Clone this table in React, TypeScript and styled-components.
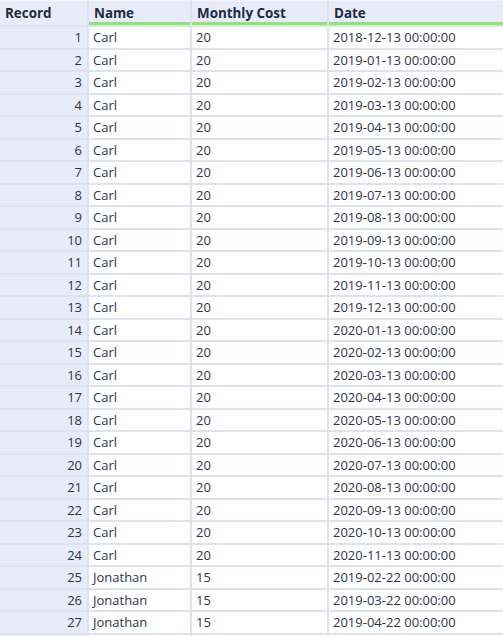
import styled, { createGlobalStyle } from 'styled-components';

interface IRow {
  record: number;
  name: string;
  cost: number;
  date: string;
}

const pad = (n: number) => (n < 10 ? `0${n}` : `${n}`);

const buildRows = () => {
  const rows: IRow[] = [];
  let y = 2018;
  let m = 12;
  for (let i = 0; i < 24; i++) {
    rows.push({ record: i + 1, name: 'Carl', cost: 20, date: `${y}-${pad(m)}-13 00:00:00` });
    m++;
    if (m > 12) {
      m = 1;
      y++;
    }
  }
  for (let i = 0; i < 3; i++) {
    rows.push({ record: 25 + i, name: 'Jonathan', cost: 15, date: `2019-${pad(2 + i)}-22 00:00:00` });
  }
  return rows;
};

const GlobalStyle = createGlobalStyle`
  html, body {
    margin: 0;
    padding: 0;
    background: #ffffff;
    overflow: hidden;
  }
`;

const App = () => {
  const rows = buildRows();
  return (
    <>
      <GlobalStyle />
      <Table>
        <HeadCell>Record</HeadCell>
        <HeadCell $accent>Name</HeadCell>
        <HeadCell $accent>Monthly Cost</HeadCell>
        <HeadCell $accent>Date</HeadCell>
        {rows.map((row) => (
          <Row key={row.record}>
            <RecordCell>{row.record}</RecordCell>
            <DataCell>{row.name}</DataCell>
            <DataCell>{row.cost}</DataCell>
            <DataCell>{row.date}</DataCell>
          </Row>
        ))}
        {/* next row, only its top edge shows */}
        <Row>
          <RecordCell />
          <DataCell />
          <DataCell />
          <DataCell />
        </Row>
      </Table>
    </>
  );
};

export default App;

const Table = styled.div`
  display: grid;
  grid-template-columns: 87px 101px 135px 1fr;
  grid-template-rows: 25px;
  grid-auto-rows: 20.5px;
  column-gap: 2px;
  row-gap: 2px;
  width: 503px;
  height: 636px;
  overflow: hidden;
  background-color: #dde2ee;
  font-family: 'Open Sans', 'Noto Sans', sans-serif;
`;

const HeadCell = styled.div<{ $accent?: boolean }>`
  display: flex;
  align-items: center;
  padding: 2px 5px 0;
  background-color: #e8ecf8;
  border-top: 1px solid #f3f5fb;
  border-bottom: 3px solid ${({ $accent }) => ($accent ? '#8ee66c' : '#e8ecf8')};
  font-size: 13.4px;
  font-weight: 700;
  color: #1d2a45;
  white-space: nowrap;
  overflow: hidden;
`;

const Row = styled.div`
  display: contents;
`;

const RecordCell = styled.div`
  display: flex;
  align-items: center;
  justify-content: flex-end;
  padding-right: 5px;
  background-color: #e8ecf8;
  font-size: 13px;
  color: #2e3446;
`;

const DataCell = styled.div`
  display: flex;
  align-items: center;
  padding-left: 4px;
  background-color: #ffffff;
  font-size: 13px;
  color: #2e3446;
  white-space: nowrap;
  overflow: hidden;
`;
